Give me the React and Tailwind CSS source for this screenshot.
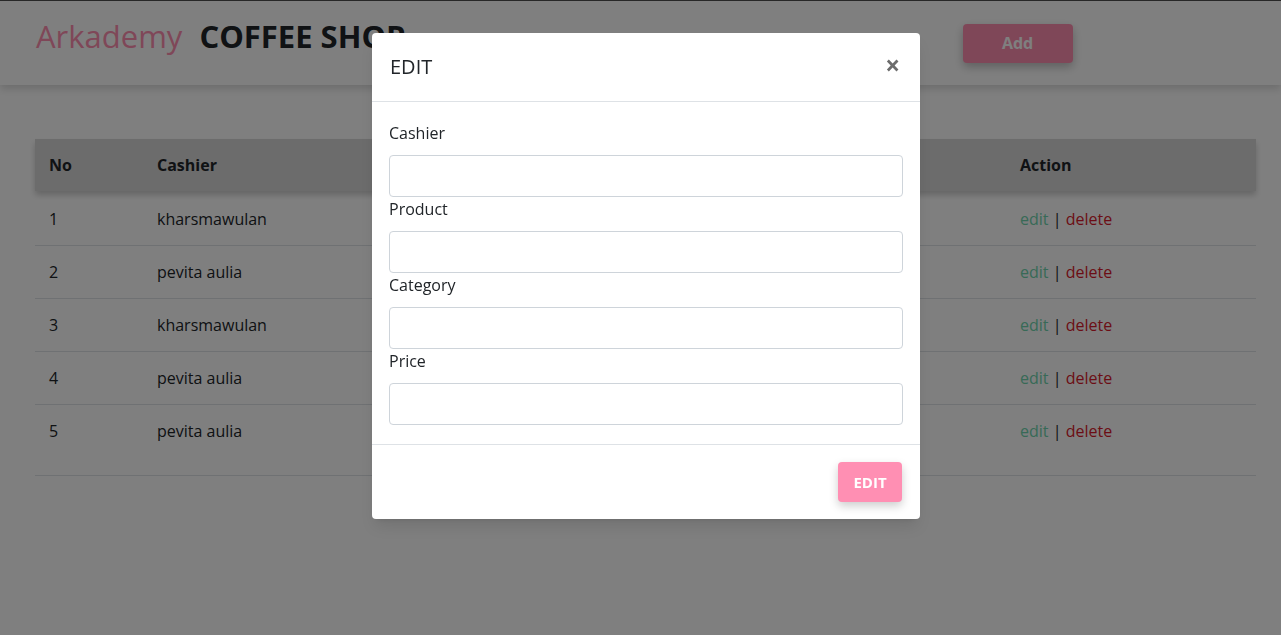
import React from 'react';

const rows = [
  { no: 1, cashier: 'kharsmawulan' },
  { no: 2, cashier: 'pevita aulia' },
  { no: 3, cashier: 'kharsmawulan' },
  { no: 4, cashier: 'pevita aulia' },
  { no: 5, cashier: 'pevita aulia' },
];

const font = { fontFamily: '"Open Sans", "Noto Sans", sans-serif' };

function Field({ label }) {
  return (
    <div>
      <label className="block h-6 leading-6 mb-[10px] text-[16px] text-[#212529]">{label}</label>
      <input className="block w-full h-[42px] rounded border border-[#ced4da] bg-white px-3" />
    </div>
  );
}

export default function App() {
  return (
    <div className="relative min-h-[635px] bg-white border-t border-[#505050]" style={font}>
      {/* Navbar */}
      <div className="h-[84px] bg-white shadow-[0_4px_8px_rgba(0,0,0,0.15)] flex items-center pl-9">
        <span className="text-[31px] text-[#ff8fb1] mr-[17px] leading-none -mt-[13px]">Arkademy</span>
        <span className="text-[31px] font-bold text-[#212529] leading-none -mt-[13px]">COFFEE SHOP</span>
        <button className="ml-[557px] w-[110px] h-[39px] rounded bg-[#ff8fb1] text-white font-bold text-[16px] shadow-[0_4px_10px_rgba(0,0,0,0.25)]">
          Add
        </button>
      </div>

      {/* Table */}
      <div className="ml-[35px] mr-[25px] mt-[54px] text-[16px] text-[#212529]">
        <div className="flex h-[52px] items-center bg-[#d8d8d8] font-bold shadow-[0_4px_6px_rgba(0,0,0,0.2)]">
          <div className="w-[108px] pl-[14px]">No</div>
          <div className="w-[230px] pl-[14px]">Cashier</div>
          <div className="w-[633px]" />
          <div className="flex-1 pl-[14px]">Action</div>
        </div>
        <div className="pt-[2px]">
          {rows.map((r, i) => (
            <div
              key={r.no}
              className={`flex border-b border-[#dee2e6] ${i === rows.length - 1 ? 'h-[71px] items-start pt-[14px]' : 'h-[53px] items-center'}`}
            >
              <div className="w-[108px] pl-[14px]">{r.no}</div>
              <div className="w-[230px] pl-[14px]">{r.cashier}</div>
              <div className="w-[633px]" />
              <div className="flex-1 pl-[14px]">
                <span className="text-[#70d4ae]">edit</span> | <span className="text-[#d81b2c]">delete</span>
              </div>
            </div>
          ))}
        </div>
      </div>

      {/* Backdrop */}
      <div className="fixed inset-0 bg-black/50" />

      {/* Modal */}
      <div className="absolute left-[372px] top-[32px] w-[548px] rounded bg-white shadow-lg">
        <div className="flex items-center justify-between h-[69px] px-[18px] border-b border-[#dee2e6]">
          <h5 className="text-[20px] text-[#212529]">EDIT</h5>
          <span className="text-[26px] font-bold text-[#6c6c6c] leading-none mr-[2px] -mt-1">×</span>
        </div>
        <div className="px-[17px] py-[19px]">
          <Field label="Cashier" />
          <Field label="Product" />
          <Field label="Category" />
          <Field label="Price" />
        </div>
        <div className="flex justify-end px-[18px] py-[17px] border-t border-[#dee2e6]">
          <button className="w-[64px] h-[40px] rounded bg-[#ff8fb3] text-white font-bold text-[15px] shadow-[0_4px_10px_rgba(0,0,0,0.2)]">
            EDIT
          </button>
        </div>
      </div>
    </div>
  );
}
